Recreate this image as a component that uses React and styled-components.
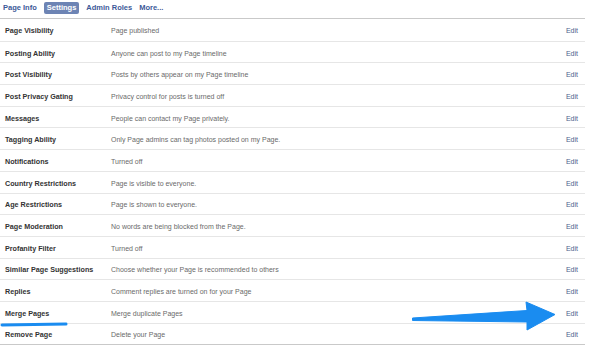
import React from 'react';
import styled, { createGlobalStyle } from 'styled-components';

const GlobalStyle = createGlobalStyle`
  body {
    margin: 0;
    background: #fff;
    font-family: "Liberation Sans", Arial, sans-serif;
  }
`;

const Page = styled.div`
  position: relative;
  width: 590px;
  height: 348px;
  overflow: hidden;
  background: #fff;
`;

const Tabs = styled.div`
  display: flex;
  align-items: center;
  gap: 7px;
  height: 18px;
  padding-left: 3px;
  width: 582px;
  border-bottom: 1px solid #c9c9c9;
`;

const Tab = styled.span`
  font-size: 7.5px;
  font-weight: bold;
  color: ${p => (p.active ? '#fff' : '#3b5998')};
  background: ${p => (p.active ? '#6d84b4' : 'transparent')};
  padding: ${p => (p.active ? '2px 3px' : '0')};
  border-radius: 2px;
  line-height: 1;
  margin-top: -2px;
`;

const List = styled.div`
  width: 585px;
  border-bottom: 1px solid #c9c9c9;
`;

const Row = styled.div`
  display: grid;
  grid-template-columns: 106px 1fr auto;
  align-items: center;
  height: 21.7px;
  box-sizing: border-box;
  padding: 2px 7px 0 5px;
  border-top: ${p => (p.first ? 'none' : '1px solid #e6e6e6')};
`;

const Label = styled.span`
  font-size: 7.2px;
  font-weight: bold;
  color: #333;
`;

const Value = styled.span`
  font-size: 7px;
  color: #6a6a6a;
`;

const Edit = styled.span`
  color: #4b5f8c;
  font-size: 7px;
`;

const Overlay = styled.svg`
  position: absolute;
  left: 0;
  top: 0;
  pointer-events: none;
`;

const rows = [
  ['Page Visibility', 'Page published'],
  ['Posting Ability', 'Anyone can post to my Page timeline'],
  ['Post Visibility', 'Posts by others appear on my Page timeline'],
  ['Post Privacy Gating', 'Privacy control for posts is turned off'],
  ['Messages', 'People can contact my Page privately.'],
  ['Tagging Ability', 'Only Page admins can tag photos posted on my Page.'],
  ['Notifications', 'Turned off'],
  ['Country Restrictions', 'Page is visible to everyone.'],
  ['Age Restrictions', 'Page is shown to everyone.'],
  ['Page Moderation', 'No words are being blocked from the Page.'],
  ['Profanity Filter', 'Turned off'],
  ['Similar Page Suggestions', 'Choose whether your Page is recommended to others'],
  ['Replies', 'Comment replies are turned on for your Page'],
  ['Merge Pages', 'Merge duplicate Pages'],
  ['Remove Page', 'Delete your Page'],
];

export default function App() {
  return (
    <Page>
      <GlobalStyle />
      <Tabs>
        <Tab>Page Info</Tab>
        <Tab active>Settings</Tab>
        <Tab>Admin Roles</Tab>
        <Tab>More...</Tab>
      </Tabs>
      <List>
        {rows.map(([label, value], i) => (
          <Row key={label} first={i === 0}>
            <Label>{label}</Label>
            <Value>{value}</Value>
            <Edit>Edit</Edit>
          </Row>
        ))}
      </List>
      <Overlay width="590" height="348" viewBox="0 0 590 348">
        <line x1="2" y1="325" x2="66" y2="324" stroke="#1a8cf0" strokeWidth="3" strokeLinecap="round" />
        <path
          d="M412.5 318 L527 310.5 L526 302 L555 314.5 L527 330 L527 322 L412.5 320.5 Z"
          fill="#1a8cf0"
          stroke="#1a8cf0"
          strokeWidth="1"
          strokeLinejoin="round"
        />
      </Overlay>
    </Page>
  );
}
